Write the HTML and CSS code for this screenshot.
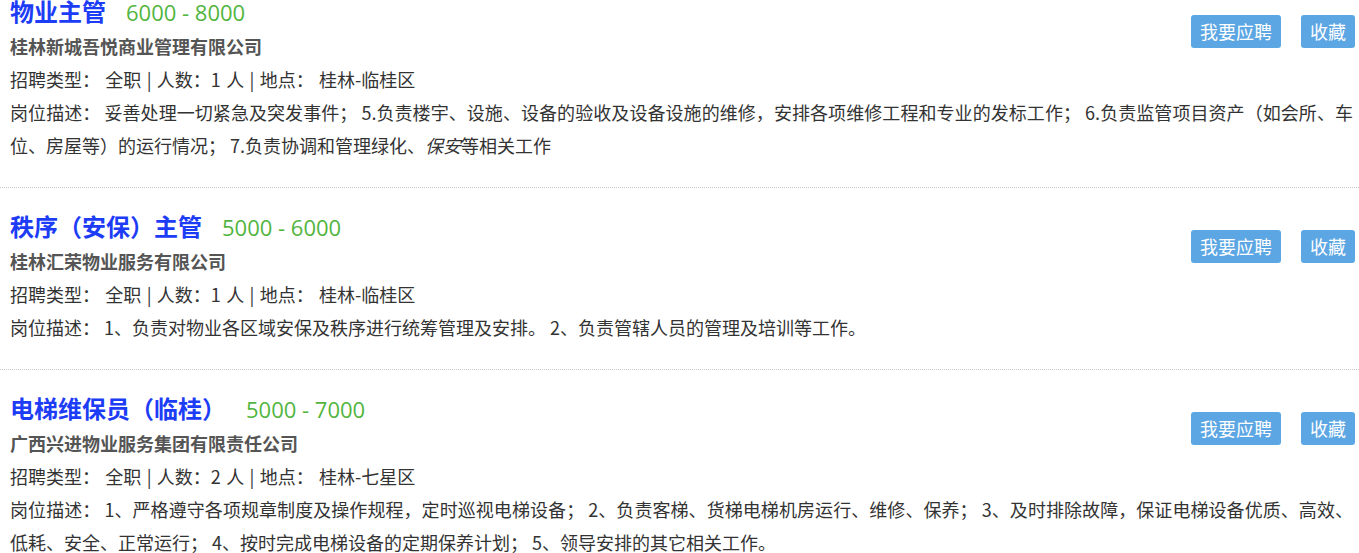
FILE: index.html
```
<!DOCTYPE html>
<html lang="zh-CN">
<head>
  <meta charset="UTF-8">
  <meta name="viewport" content="width=device-width, initial-scale=1.0">
  <title>职位列表</title>
  <link rel="stylesheet" href="styles.css">
</head>
<body>
  <div class="job-list">
    <div class="job-item">
      <div class="job-title">
        <a href="#" class="job-name">物业主管</a><span class="job-salary">6000 - 8000</span>
      </div>
      <div class="job-actions">
        <button class="btn">我要应聘</button>
        <button class="btn">收藏</button>
      </div>
      <div class="job-company">桂林新城吾悦商业管理有限公司</div>
      <div class="job-meta">招聘类型： 全职 | 人数：1 人 | 地点： 桂林-临桂区</div>
      <div class="job-desc"><span class="desc-line">岗位描述： 妥善处理一切紧急及突发事件； 5.负责楼宇、设施、设备的验收及设备设施的维修，安排各项维修工程和专业的发标工作； 6.负责监管项目资产（如会所、车</span>位、房屋等）的运行情况； 7.负责协调和管理绿化、<em>保安</em>等相关工作</div>
    </div>

    <div class="job-item">
      <div class="job-title">
        <a href="#" class="job-name">秩序（安保）主管</a><span class="job-salary">5000 - 6000</span>
      </div>
      <div class="job-actions">
        <button class="btn">我要应聘</button>
        <button class="btn">收藏</button>
      </div>
      <div class="job-company">桂林汇荣物业服务有限公司</div>
      <div class="job-meta">招聘类型： 全职 | 人数：1 人 | 地点： 桂林-临桂区</div>
      <div class="job-desc">岗位描述： 1、负责对物业各区域安保及秩序进行统筹管理及安排。 2、负责管辖人员的管理及培训等工作。</div>
    </div>

    <div class="job-item">
      <div class="job-title">
        <a href="#" class="job-name">电梯维保员（临桂）</a><span class="job-salary">5000 - 7000</span>
      </div>
      <div class="job-actions">
        <button class="btn">我要应聘</button>
        <button class="btn">收藏</button>
      </div>
      <div class="job-company">广西兴进物业服务集团有限责任公司</div>
      <div class="job-meta">招聘类型： 全职 | 人数：2 人 | 地点： 桂林-七星区</div>
      <div class="job-desc">岗位描述： 1、严格遵守各项规章制度及操作规程，定时巡视电梯设备； 2、负责客梯、货梯电梯机房运行、维修、保养； 3、及时排除故障，保证电梯设备优质、高效、低耗、安全、正常运行； 4、按时完成电梯设备的定期保养计划； 5、领导安排的其它相关工作。</div>
    </div>
  </div>
</body>
</html>
```

FILE: styles.css
```
body {
  margin: 0;
  padding: 0;
  font-family: "Noto Sans CJK SC", sans-serif;
  font-size: 18px;
  color: #333;
  background-color: #fff;
  overflow: hidden;
}

/* list is scrolled a little, first item is cut at the top */
.job-list {
  margin-top: -27px;
}

.job-item {
  display: grid;
  grid-template-columns: 1fr auto;
  padding: 21px 0 25px 10px;
  border-bottom: 1px dotted #c8c8c8;
}

.job-title {
  grid-column: 1;
  line-height: 34px;
  white-space: nowrap;
}

.job-name {
  font-size: 24px;
  font-weight: bold;
  color: #1c3cf6;
  text-decoration: none;
}

.job-salary {
  margin-left: 20px;
  font-family: "Open Sans", "Noto Sans CJK SC", sans-serif;
  font-size: 22px;
  color: #52b540;
}

.job-actions {
  grid-column: 2;
  grid-row: 1 / span 3;
  display: flex;
  align-items: flex-start;
  gap: 20px;
  margin: 21px 4px 0 0;
}

.btn {
  height: 33px;
  padding: 0 9px;
  border: none;
  border-radius: 3px;
  background-color: #5ca6e3;
  color: #fff;
  font-family: "Noto Sans CJK SC", sans-serif;
  font-size: 18px;
  line-height: 33px;
  cursor: pointer;
}

.job-company {
  grid-column: 1;
  font-weight: bold;
  color: #555;
  line-height: 33px;
}

.job-meta {
  grid-column: 1;
  line-height: 33px;
  word-spacing: 1.3px;
}

.job-desc {
  grid-column: 1 / span 2;
  line-height: 33px;
  text-align: justify;
  padding-right: 6px;
}

.desc-line {
  display: block;
  text-align-last: justify;
}

.job-desc em {
  font-style: italic;
}
```
